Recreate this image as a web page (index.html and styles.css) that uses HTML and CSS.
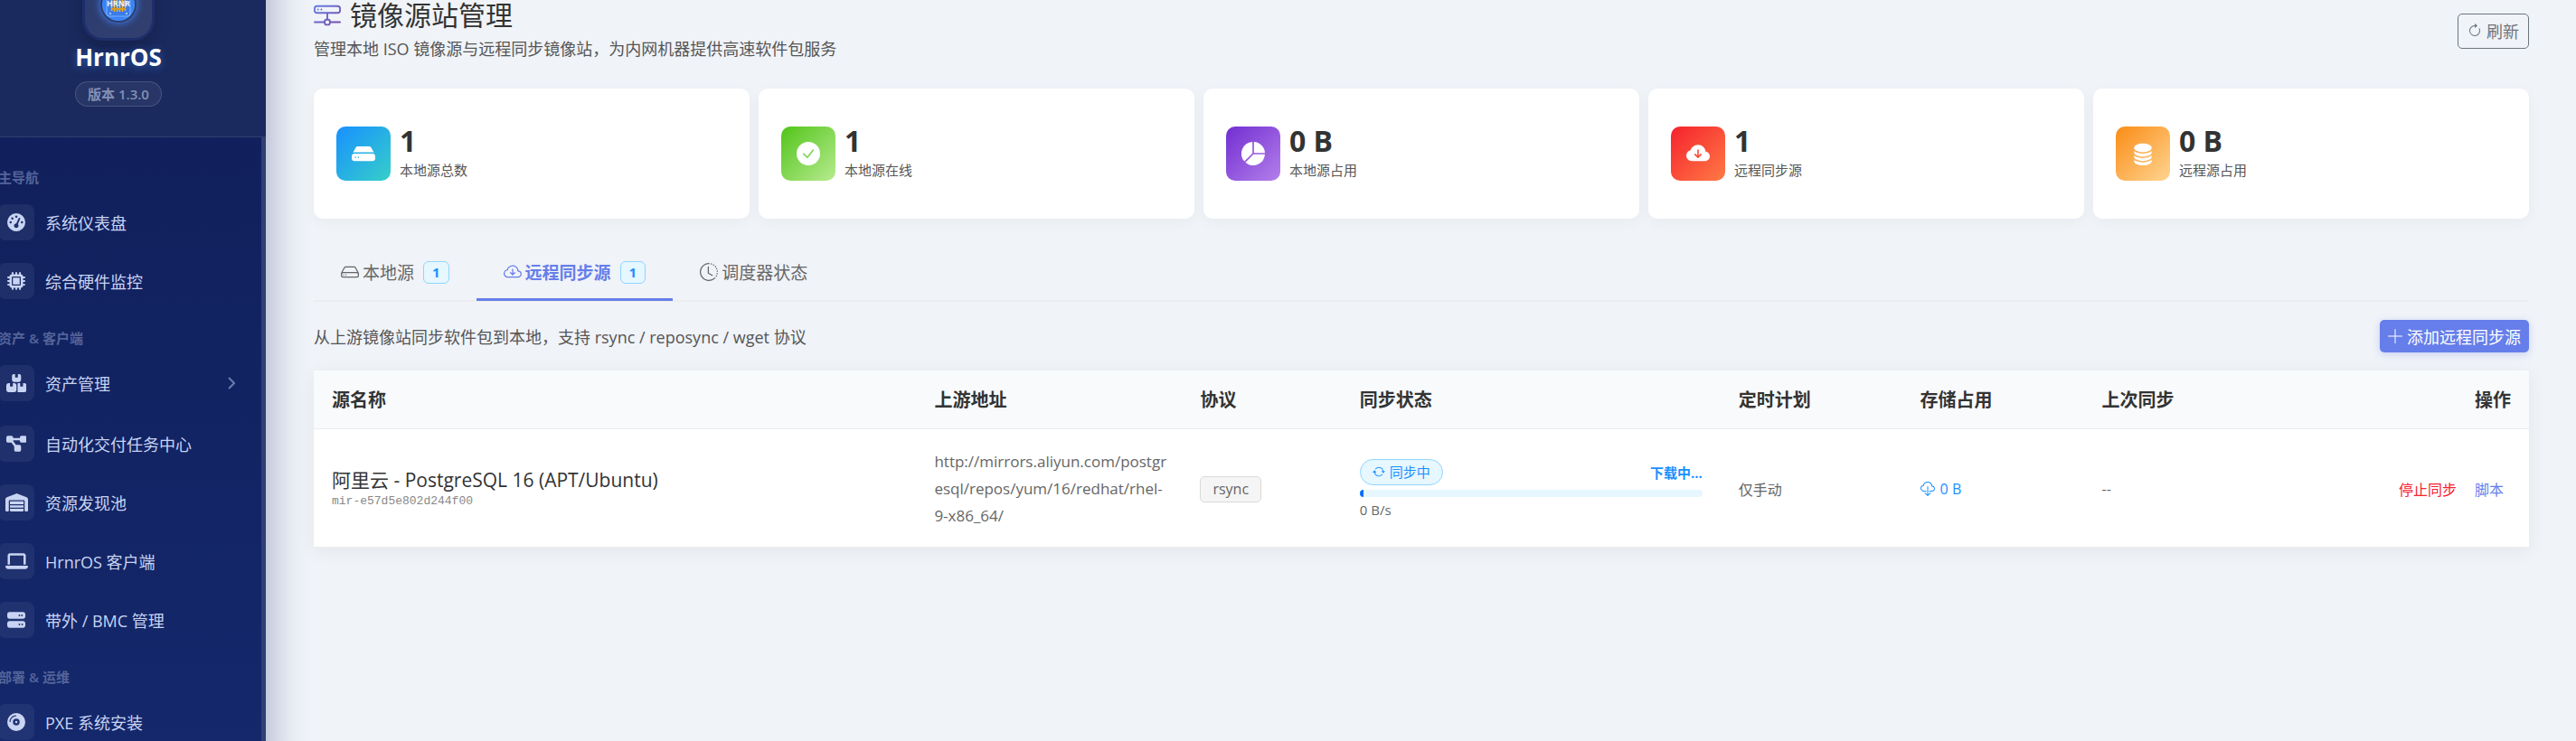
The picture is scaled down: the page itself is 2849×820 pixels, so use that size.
FILE: index.html
```html
<!DOCTYPE html>
<html lang="zh-CN">
<head>
    <meta charset="UTF-8">
    <meta name="viewport" content="width=device-width, initial-scale=1.0">
    <title>镜像源站管理 - HrnrOS</title>
    <link rel="stylesheet" href="styles.css">
</head>
<body>
    <div class="layout">
        <aside class="sidebar">
            <div class="sidebar-header">
                <div class="logo">
                    <svg viewBox="0 0 40 40" width="40" height="40">
                        <defs>
                            <radialGradient id="glow">
                                <stop offset="0.6" stop-color="#2f6fe0"/>
                                <stop offset="1" stop-color="#3f8cff"/>
                            </radialGradient>
                        </defs>
                        <circle cx="20" cy="20" r="18" fill="url(#glow)"/>
                        <rect x="7" y="8" width="26" height="25" rx="3" fill="#3b7bea" stroke="#7db8ff"/>
                        <path d="M12.500 12v15M15.500 12v16M18.500 12v16M21.500 12v16M24.500 12v16M27.500 12v15" stroke="#f0b429" stroke-width="1.500"/>
                        <path d="M12 25h16" stroke="#d99a20" stroke-width="2"/>
                        <circle cx="11" cy="30" r="1" fill="#bfe0ff"/>
                        <circle cx="29" cy="30" r="1" fill="#bfe0ff"/>
                        <text x="20" y="22" text-anchor="middle" class="logo-text">HRNR</text>
                    </svg>
                </div>
                <div class="brand">HrnrOS</div>
                <span class="version">版本 1.3.0</span>
            </div>
            <nav class="sidebar-nav">
                <div class="nav-label">主导航</div>
                <a class="nav-item" href="#">
                    <span class="nav-icon"><svg viewBox="0 0 512 512"><path d="M0 256a256 256 0 1 1 512 0A256 256 0 1 1 0 256zM288 96a32 32 0 1 0 -64 0 32 32 0 1 0 64 0zM256 416c35.3 0 64-28.7 64-64c0-17.4-6.9-33.1-18.1-44.6L366 161.7c5.3-12.1-.2-26.3-12.3-31.6s-26.3 .2-31.6 12.3L257.9 288c-.6 0-1.3 0-1.9 0c-35.3 0-64 28.7-64 64s28.7 64 64 64zM176 144a32 32 0 1 0 -64 0 32 32 0 1 0 64 0zM96 288a32 32 0 1 0 0-64 32 32 0 1 0 0 64zm352-32a32 32 0 1 0 -64 0 32 32 0 1 0 64 0z"/></svg></span>
                    <span>系统仪表盘</span>
                </a>
                <a class="nav-item" href="#">
                    <span class="nav-icon"><svg viewBox="0 0 512 512"><path d="M176 24c0-13.3-10.7-24-24-24s-24 10.7-24 24V64c-35.3 0-64 28.7-64 64H24c-13.3 0-24 10.7-24 24s10.7 24 24 24H64v56H24c-13.3 0-24 10.7-24 24s10.7 24 24 24H64v56H24c-13.3 0-24 10.7-24 24s10.7 24 24 24H64c0 35.3 28.7 64 64 64v40c0 13.3 10.7 24 24 24s24-10.7 24-24V448h56v40c0 13.3 10.7 24 24 24s24-10.7 24-24V448h56v40c0 13.3 10.7 24 24 24s24-10.7 24-24V448c35.3 0 64-28.7 64-64h40c13.3 0 24-10.7 24-24s-10.7-24-24-24H448V280h40c13.3 0 24-10.7 24-24s-10.7-24-24-24H448V176h40c13.3 0 24-10.7 24-24s-10.7-24-24-24H448c0-35.3-28.7-64-64-64V24c0-13.3-10.7-24-24-24s-24 10.7-24 24V64H280V24c0-13.3-10.7-24-24-24s-24 10.7-24 24V64H176V24zM160 128H352c17.7 0 32 14.3 32 32V352c0 17.7-14.3 32-32 32H160c-17.7 0-32-14.3-32-32V160c0-17.7 14.3-32 32-32zm192 32H160V352H352V160z" fill-rule="evenodd"/></svg></span>
                    <span>综合硬件监控</span>
                </a>
                <div class="nav-label">资产 &amp; 客户端</div>
                <a class="nav-item has-sub" href="#">
                    <span class="nav-icon"><svg viewBox="0 0 576 512"><path d="M248 0H208c-26.5 0-48 21.5-48 48V160c0 35.3 28.7 64 64 64H352c35.3 0 64-28.7 64-64V48c0-26.5-21.5-48-48-48H328V80c0 8.8-7.2 16-16 16H264c-8.8 0-16-7.2-16-16V0zM64 256c-35.3 0-64 28.7-64 64V448c0 35.3 28.7 64 64 64H224c35.3 0 64-28.7 64-64V320c0-35.3-28.7-64-64-64H184v80c0 8.8-7.2 16-16 16H120c-8.8 0-16-7.2-16-16V256H64zM352 512H512c35.3 0 64-28.7 64-64V320c0-35.3-28.7-64-64-64H472v80c0 8.8-7.2 16-16 16H408c-8.8 0-16-7.2-16-16V256H352c-15 0-28.8 5.1-39.7 13.8c4.9 10.4 7.7 22 7.7 34.2V464c0 12.2-2.8 23.8-7.7 34.2C323.2 506.9 337 512 352 512z"/></svg></span>
                    <span>资产管理</span>
                    <svg class="chevron" viewBox="0 0 8 14"><path d="M1 1l6 6-6 6"/></svg>
                </a>
                <a class="nav-item" href="#">
                    <span class="nav-icon"><svg viewBox="0 0 576 512"><path d="M0 80C0 53.5 21.5 32 48 32h96c26.5 0 48 21.5 48 48V96H384V80c0-26.5 21.5-48 48-48h96c26.5 0 48 21.5 48 48v96c0 26.5-21.5 48-48 48H432c-26.5 0-48-21.5-48-48V160H192v16c0 1.7-.1 3.4-.3 5L272 288h96c26.5 0 48 21.5 48 48v96c0 26.5-21.5 48-48 48H272c-26.5 0-48-21.5-48-48V336c0-1.7 .1-3.4 .3-5L144 224H48c-26.5 0-48-21.5-48-48V80z"/></svg></span>
                    <span>自动化交付任务中心</span>
                </a>
                <a class="nav-item" href="#">
                    <span class="nav-icon"><svg viewBox="0 0 640 512"><path d="M0 488V171.3c0-26.2 15.9-49.7 40.2-59.4L308.1 4.8c7.6-3.1 16.1-3.1 23.8 0L599.8 111.9c24.3 9.7 40.2 33.3 40.2 59.4V488c0 13.3-10.7 24-24 24H568c-13.3 0-24-10.7-24-24V224c0-17.7-14.3-32-32-32H128c-17.7 0-32 14.3-32 32V488c0 13.3-10.7 24-24 24H24c-13.3 0-24-10.7-24-24zm488 24l-336 0c-13.3 0-24-10.7-24-24V432H512l0 56c0 13.3-10.7 24-24 24zM128 400V336H512v64H128zm0-96V224H512l0 80H128z"/></svg></span>
                    <span>资源发现池</span>
                </a>
                <a class="nav-item" href="#">
                    <span class="nav-icon"><svg viewBox="0 0 640 512"><path d="M128 32C92.7 32 64 60.7 64 96V352h64V96H512V352h64V96c0-35.3-28.7-64-64-64H128zM19.2 384C8.6 384 0 392.6 0 403.2C0 445.6 34.4 480 76.8 480H563.2c42.4 0 76.8-34.4 76.8-76.8c0-10.6-8.6-19.2-19.2-19.2H19.2z"/></svg></span>
                    <span>HrnrOS 客户端</span>
                </a>
                <a class="nav-item" href="#">
                    <span class="nav-icon"><svg viewBox="0 0 512 512"><path d="M64 32C28.7 32 0 60.7 0 96v64c0 35.3 28.7 64 64 64H448c35.3 0 64-28.7 64-64V96c0-35.3-28.7-64-64-64H64zm280 72a24 24 0 1 1 0 48 24 24 0 1 1 0-48zm48 24a24 24 0 1 1 48 0 24 24 0 1 1 -48 0zM64 288c-35.3 0-64 28.7-64 64v64c0 35.3 28.7 64 64 64H448c35.3 0 64-28.7 64-64V352c0-35.3-28.7-64-64-64H64zm280 72a24 24 0 1 1 0 48 24 24 0 1 1 0-48zm56 24a24 24 0 1 1 48 0 24 24 0 1 1 -48 0z" fill-rule="evenodd"/></svg></span>
                    <span>带外 / BMC 管理</span>
                </a>
                <div class="nav-label">部署 &amp; 运维</div>
                <a class="nav-item" href="#">
                    <span class="nav-icon"><svg viewBox="0 0 512 512"><path d="M0 256a256 256 0 1 1 512 0A256 256 0 1 1 0 256zm256 32a32 32 0 1 1 0-64 32 32 0 1 1 0 64zm-96-32a96 96 0 1 0 192 0 96 96 0 1 0 -192 0zM96 240c0-35 17.5-71.1 45.2-98.8S205 96 240 96c8.8 0 16-7.2 16-16s-7.2-16-16-16c-45.4 0-89.2 22.3-121.5 54.5S64 194.6 64 240c0 8.8 7.2 16 16 16s16-7.2 16-16z" fill-rule="evenodd"/></svg></span>
                    <span>PXE 系统安装</span>
                </a>
            </nav>
        </aside>

        <main class="content">
            <header class="page-header">
                <div>
                    <h1 class="page-title">
                        <svg class="icon-title" viewBox="0 0 16 16">
                            <defs>
                                <linearGradient id="title-color" x1="0" y1="0" x2="1" y2="1">
                                    <stop offset="0" stop-color="#667eea"/>
                                    <stop offset="1" stop-color="#764ba2"/>
                                </linearGradient>
                            </defs>
                            <g fill="url(#title-color)">
                                <path d="M4.5 5a.5.5 0 1 0 0-1 .5.5 0 0 0 0 1M3 4.5a.5.5 0 1 1-1 0 .5.5 0 0 1 1 0"/>
                                <path d="M0 4a2 2 0 0 1 2-2h12a2 2 0 0 1 2 2v1a2 2 0 0 1-2 2H8.500v3a1.500 1.500 0 0 1 1.500 1.500h5.500a.5.5 0 0 1 0 1H10A1.500 1.500 0 0 1 8.500 14h-1A1.500 1.500 0 0 1 6 12.500H.5a.5.5 0 0 1 0-1H6A1.500 1.500 0 0 1 7.500 10V7H2a2 2 0 0 1-2-2zm1 0v1a1 1 0 0 0 1 1h12a1 1 0 0 0 1-1V4a1 1 0 0 0-1-1H2a1 1 0 0 0-1 1m6 7.500v1a.5.5 0 0 0 .5.5h1a.5.5 0 0 0 .5-.5v-1a.5.5 0 0 0-.5-.5h-1a.5.5 0 0 0-.5.5" fill-rule="evenodd"/>
                            </g>
                        </svg>
                        镜像源站管理
                    </h1>
                    <p class="page-desc">管理本地 ISO 镜像源与远程同步镜像站，为内网机器提供高速软件包服务</p>
                </div>
                <button class="btn btn-outline" type="button">
                    <svg class="icon" viewBox="0 0 16 16"><path fill-rule="evenodd" d="M8 3a5 5 0 1 0 4.546 2.914.5.5 0 0 1 .908-.417A6 6 0 1 1 8 2z"/><path d="M8 4.466V.534a.25.25 0 0 1 .41-.192l2.36 1.966c.12.1.12.284 0 .384L8.410 4.658A.25.25 0 0 1 8 4.466"/></svg>
                    刷新
                </button>
            </header>

            <section class="stats">
                <div class="stat-card">
                    <div class="stat-icon blue"><svg viewBox="0 0 16 16"><path d="M0 10a2 2 0 0 1 2-2h12a2 2 0 0 1 2 2v1a2 2 0 0 1-2 2H2a2 2 0 0 1-2-2zm2.500 1a.5.5 0 1 0 0-1 .5.5 0 0 0 0 1m2 0a.5.5 0 1 0 0-1 .5.5 0 0 0 0 1M.91 7.204A3 3 0 0 1 2 7h12c.384 0 .752.072 1.090.204l-1.867-3.422A1.500 1.500 0 0 0 11.906 3H4.094a1.500 1.500 0 0 0-1.317.782z"/></svg></div>
                    <div>
                        <div class="stat-value">1</div>
                        <div class="stat-label">本地源总数</div>
                    </div>
                </div>
                <div class="stat-card">
                    <div class="stat-icon green"><svg viewBox="0 0 16 16"><circle cx="8" cy="8" r="8"/><path class="check" d="M4.800 8.200l2.500 2.400 4-5"/></svg></div>
                    <div>
                        <div class="stat-value">1</div>
                        <div class="stat-label">本地源在线</div>
                    </div>
                </div>
                <div class="stat-card">
                    <div class="stat-icon purple"><svg viewBox="0 0 16 16"><path d="M15.985 8.500H8.207l-5.500 5.500a8 8 0 0 0 13.277-5.500zM2 13.292A8 8 0 0 1 7.500.015v7.778zM8.500.015V7.500h7.485A8 8 0 0 0 8.500.015"/></svg></div>
                    <div>
                        <div class="stat-value">0 B</div>
                        <div class="stat-label">本地源占用</div>
                    </div>
                </div>
                <div class="stat-card">
                    <div class="stat-icon red"><svg viewBox="0 0 16 16"><path d="M8 2a5.530 5.530 0 0 0-3.594 1.342c-.766.66-1.321 1.520-1.464 2.383C1.266 6.095 0 7.555 0 9.318 0 11.366 1.708 13 3.781 13h8.906C14.502 13 16 11.570 16 9.773c0-1.636-1.242-2.969-2.834-3.194C12.923 3.999 10.690 2 8 2m2.354 6.854-2 2a.5.5 0 0 1-.708 0l-2-2a.5.5 0 1 1 .708-.708L7.500 9.293V5.500a.5.5 0 0 1 1 0v3.793l1.146-1.147a.5.5 0 0 1 .708.708"/></svg></div>
                    <div>
                        <div class="stat-value">1</div>
                        <div class="stat-label">远程同步源</div>
                    </div>
                </div>
                <div class="stat-card">
                    <div class="stat-icon orange"><svg viewBox="0 0 16 16"><path d="M3.904 1.777C4.978 1.289 6.427 1 8 1s3.022.289 4.096.777C13.125 2.245 14 2.993 14 4s-.875 1.755-1.904 2.223C11.022 6.711 9.573 7 8 7s-3.022-.289-4.096-.777C2.875 5.755 2 5.007 2 4s.875-1.755 1.904-2.223"/><path d="M2 6.161V7c0 1.007.875 1.755 1.904 2.223C4.978 9.710 6.427 10 8 10s3.022-.289 4.096-.777C13.125 8.755 14 8.007 14 7v-.839c-.457.432-1.004.751-1.490.972C11.278 7.693 9.682 8 8 8s-3.278-.307-4.510-.867c-.486-.22-1.033-.54-1.490-.972"/><path d="M2 9.161V10c0 1.007.875 1.755 1.904 2.223C4.978 12.711 6.427 13 8 13s3.022-.289 4.096-.777C13.125 11.755 14 11.007 14 10v-.839c-.457.432-1.004.751-1.490.972-1.232.56-2.828.867-4.510.867s-3.278-.307-4.510-.867c-.486-.22-1.033-.54-1.490-.972"/><path d="M2 12.161V13c0 1.007.875 1.755 1.904 2.223C4.978 15.711 6.427 16 8 16s3.022-.289 4.096-.777C13.125 14.755 14 14.007 14 13v-.839c-.457.432-1.004.751-1.490.972-1.232.56-2.828.867-4.510.867s-3.278-.307-4.510-.867c-.486-.22-1.033-.54-1.490-.972"/></svg></div>
                    <div>
                        <div class="stat-value">0 B</div>
                        <div class="stat-label">远程源占用</div>
                    </div>
                </div>
            </section>

            <div class="tabs" role="tablist">
                <button class="tab" type="button" role="tab">
                    <svg class="icon-tab" viewBox="0 0 16 16"><path d="M4.500 11a.5.5 0 1 0 0-1 .5.5 0 0 0 0 1M3 10.500a.5.5 0 1 1-1 0 .5.5 0 0 1 1 0"/><path d="M16 11a2 2 0 0 1-2 2H2a2 2 0 0 1-2-2V9.510c0-.418.105-.83.305-1.197l2.472-4.531A1.500 1.500 0 0 1 4.094 3h7.812a1.500 1.500 0 0 1 1.317.782l2.472 4.530c.2.368.305.78.305 1.198zM3.655 4.260 1.592 8.043Q1.790 8 2 8h12q.21 0 .408.042L12.345 4.260a.5.5 0 0 0-.439-.26H4.094a.5.5 0 0 0-.44.26zM1 10v1a1 1 0 0 0 1 1h12a1 1 0 0 0 1-1v-1a1 1 0 0 0-1-1H2a1 1 0 0 0-1 1"/></svg>
                    本地源
                    <span class="count">1</span>
                </button>
                <button class="tab active" type="button" role="tab" aria-selected="true">
                    <svg class="icon-tab" viewBox="0 0 16 16"><path d="M7.646 10.854a.5.5 0 0 0 .708 0l2-2a.5.5 0 0 0-.708-.708L8.500 9.293V5.500a.5.5 0 0 0-1 0v3.793L6.354 8.146a.5.5 0 1 0-.708.708z"/><path d="M4.406 3.342A5.530 5.530 0 0 1 8 2c2.690 0 4.923 2 5.166 4.579C14.758 6.804 16 8.137 16 9.773 16 11.569 14.502 13 12.687 13H3.781C1.708 13 0 11.366 0 9.318c0-1.763 1.266-3.223 2.942-3.593.143-.863.698-1.723 1.464-2.383m.653.757c-.757.653-1.153 1.440-1.153 2.056v.448l-.445.049C2.064 6.805 1 7.952 1 9.318 1 10.785 2.230 12 3.781 12h8.906C13.980 12 15 10.988 15 9.773c0-1.216-1.020-2.228-2.313-2.228h-.5v-.5C12.188 4.825 10.328 3 8 3a4.530 4.530 0 0 0-2.941 1.100z"/></svg>
                    远程同步源
                    <span class="count">1</span>
                </button>
                <button class="tab" type="button" role="tab">
                    <svg class="icon-tab" viewBox="0 0 16 16"><path d="M8.515 1.019A7 7 0 0 0 8 1V0a8 8 0 0 1 .589.022zm2.004.45a7 7 0 0 0-.985-.299l.219-.976q.576.129 1.126.342zm1.370.71a7 7 0 0 0-.439-.27l.493-.87a8 8 0 0 1 .979.654l-.615.789a7 7 0 0 0-.418-.302zm1.834 1.790a7 7 0 0 0-.653-.796l.724-.69q.406.429.747.91zm.744 1.352a7 7 0 0 0-.214-.468l.893-.45a8 8 0 0 1 .45 1.088l-.95.313a7 7 0 0 0-.179-.483m.53 2.507a7 7 0 0 0-.1-1.025l.985-.17q.1.58.116 1.170zm-.131 1.538q.05-.254.081-.51l.993.123a8 8 0 0 1-.23 1.155l-.964-.267q.069-.247.12-.501m-.952 2.379q.276-.436.486-.908l.914.405q-.24.54-.555 1.038zm-.964 1.205q.183-.183.35-.378l.758.653a8 8 0 0 1-.401.432z"/><path d="M8 1a7 7 0 1 0 4.950 11.950l.707.707A8.001 8.001 0 1 1 8 0z"/><path d="M7.500 3a.5.5 0 0 1 .5.5v5.210l3.248 1.856a.5.5 0 0 1-.496.868l-3.500-2A.5.5 0 0 1 7 9V3.500a.5.5 0 0 1 .5-.5"/></svg>
                    调度器状态
                </button>
            </div>

            <div class="toolbar">
                <span>从上游镜像站同步软件包到本地，支持 rsync / reposync / wget 协议</span>
                <button class="btn btn-primary" type="button">
                    <svg class="icon" viewBox="0 0 16 16"><path d="M8 0a.5.5 0 0 1 .5.5v7h7a.5.5 0 0 1 0 1h-7v7a.5.5 0 0 1-1 0v-7h-7a.5.5 0 0 1 0-1h7v-7A.5.5 0 0 1 8 0"/></svg>
                    添加远程同步源
                </button>
            </div>

            <table class="mirror-table">
                <thead>
                    <tr>
                        <th class="col-name">源名称</th>
                        <th class="col-url">上游地址</th>
                        <th class="col-proto">协议</th>
                        <th class="col-status">同步状态</th>
                        <th class="col-plan">定时计划</th>
                        <th class="col-size">存储占用</th>
                        <th>上次同步</th>
                        <th class="ops">操作</th>
                    </tr>
                </thead>
                <tbody>
                    <tr>
                        <td>
                            <div class="mirror-name">阿里云 - PostgreSQL 16 (APT/Ubuntu)</div>
                            <div class="mirror-id">mir-e57d5e802d244f00</div>
                        </td>
                        <td class="url">http://mirrors.aliyun.com/postgresql/repos/yum/16/redhat/rhel-9-x86_64/</td>
                        <td><span class="tag">rsync</span></td>
                        <td>
                            <div class="sync-head">
                                <span class="pill">
                                    <svg viewBox="0 0 16 16"><path d="M11.534 7h3.932a.25.25 0 0 1 .192.41l-1.966 2.360a.25.25 0 0 1-.384 0l-1.966-2.360a.25.25 0 0 1 .192-.41m-11 2h3.932a.25.25 0 0 0 .192-.41L2.692 6.230a.25.25 0 0 0-.384 0L.342 8.590A.25.25 0 0 0 .534 9"/><path d="M8 3c-1.552 0-2.940.707-3.857 1.818a.5.5 0 1 1-.771-.636A6.002 6.002 0 0 1 13.917 7H12.900A5 5 0 0 0 8 3M3.100 9a5.002 5.002 0 0 0 8.757 2.182.5.5 0 1 1 .771.636A6.002 6.002 0 0 1 2.083 9z"/></svg>
                                    同步中
                                </span>
                                <strong class="sync-text">下载中...</strong>
                            </div>
                            <div class="progress"><div class="progress-bar" style="width: 1%"></div></div>
                            <div class="speed">0 B/s</div>
                        </td>
                        <td>仅手动</td>
                        <td>
                            <span class="size">
                                <svg class="icon-size" viewBox="0 0 16 16"><path d="M4.406 1.342A5.530 5.530 0 0 1 8 0c2.690 0 4.923 2 5.166 4.579C14.758 4.804 16 6.137 16 7.773 16 9.569 14.502 11 12.687 11H10a.5.5 0 0 1 0-1h2.688C13.979 10 15 8.988 15 7.773c0-1.216-1.020-2.228-2.313-2.228h-.5v-.5C12.188 2.825 10.328 1 8 1a4.530 4.530 0 0 0-2.941 1.100c-.757.652-1.153 1.438-1.153 2.055v.448l-.445.049C2.064 4.805 1 5.952 1 7.318 1 8.785 2.230 10 3.781 10H6a.5.5 0 0 1 0 1H3.781C1.708 11 0 9.366 0 7.318c0-1.763 1.266-3.223 2.942-3.593.143-.863.698-1.723 1.464-2.383"/><path d="M7.646 15.854a.5.5 0 0 0 .708 0l3-3a.5.5 0 0 0-.708-.708L8.500 14.293V5.500a.5.5 0 0 0-1 0v8.793l-2.146-2.147a.5.5 0 0 0-.708.708z"/></svg>
                                0 B
                            </span>
                        </td>
                        <td>--</td>
                        <td class="ops">
                            <div class="actions">
                                <button class="link danger" type="button">停止同步</button>
                                <button class="link" type="button">脚本</button>
                            </div>
                        </td>
                    </tr>
                </tbody>
            </table>
        </main>
    </div>
</body>
</html>
```
FILE: styles.css
```css
*{
    margin: 0;
    padding: 0;
    box-sizing: border-box;
}
body{
    font-family: "Open Sans", "Noto Sans CJK SC", sans-serif;
    font-size: 18px;
    color: #333;
    background: #f0f3f8;
}
button{
    font-family: inherit;
    cursor: pointer;
}
svg{
    fill: currentColor;
    flex-shrink: 0;
}
.layout{
    display: flex;
    height: 100vh;
    overflow: hidden;
}

/* sidebar */
.sidebar{
    display: flex;
    flex-direction: column;
    flex: 0 0 326px;
    margin: -52px 0 -40px -32px;
    background: linear-gradient(180deg, #101e58, #14286c);
    box-shadow: 8px 0 36px rgba(26, 42, 108, 0.3);
}
.sidebar-header{
    display: flex;
    flex-direction: column;
    align-items: center;
    padding: 20px 20px 33px;
    background: #1a2a5e;
    border-bottom: 1px solid rgba(255, 255, 255, 0.1);
}
.logo{
    display: flex;
    align-items: center;
    justify-content: center;
    width: 74px;
    height: 74px;
    border-radius: 20px;
    background: linear-gradient(135deg, #2b3b6f, #323f70);
    box-shadow: 0 0 0 3px #1c2f6b, 0 8px 20px rgba(0, 0, 0, 0.25);
}
.logo svg{
    border-radius: 50%;
    box-shadow: 0 0 8px #3f8cff;
}
.logo-text{
    font: bold 9px "Open Sans", sans-serif;
    fill: #e8f1ff;
}
.brand{
    margin-top: 5px;
    font-size: 26px;
    font-weight: 700;
    line-height: 32px;
    color: #fff;
    text-shadow: 0 2px 10px rgba(64, 140, 255, 0.5);
}
.version{
    margin-top: 11px;
    padding: 0 13px;
    border: 1px solid rgba(255, 255, 255, 0.15);
    border-radius: 14px;
    background: rgba(255, 255, 255, 0.06);
    font-size: 15px;
    font-weight: 600;
    line-height: 26px;
    color: #8390b5;
}
.sidebar-nav{
    flex: 1;
    min-height: 0;
    padding: 16px 24px 0 30px;
    border-right: 5px solid #2f3f75;
    overflow: hidden;
}
.nav-label{
    padding: 18px 0 10px;
    font-size: 15px;
    font-weight: 600;
    line-height: 20px;
    color: #54649a;
}
.nav-item{
    display: flex;
    align-items: center;
    gap: 12px;
    height: 60px;
    margin-bottom: 5px;
    color: #c8d4f2;
    text-decoration: none;
}
.nav-item.has-sub{
    margin-bottom: 7px;
}
.nav-icon{
    display: flex;
    align-items: center;
    justify-content: center;
    width: 40px;
    height: 40px;
    border-radius: 8px;
    background: rgba(255, 255, 255, 0.06);
}
.nav-icon svg{
    height: 20px;
}
.chevron{
    width: 8px;
    height: 14px;
    margin: 0 5px 0 auto;
    fill: none;
    stroke: #6b7aac;
    stroke-width: 2;
}

/* page header */
.content{
    flex: 1;
    min-width: 0;
    padding: 0 52px 0 53px;
}
.page-header{
    display: flex;
    align-items: center;
    justify-content: space-between;
    margin-bottom: 30px;
}
.page-title{
    display: flex;
    align-items: center;
    gap: 10px;
    font-size: 30px;
    font-weight: 400;
    line-height: 34px;
}
.icon-title{
    width: 30px;
    height: 30px;
}
.page-desc{
    margin-top: 6px;
    line-height: 28px;
    color: #555;
}
.btn{
    display: flex;
    align-items: center;
    gap: 5px;
    border-radius: 5px;
    font-size: 18px;
}
.btn-outline{
    height: 39px;
    padding: 0 10px;
    border: 1px solid #6c757d;
    background: none;
    color: #6c757d;
}
.btn-primary{
    height: 36px;
    padding: 0 9px;
    border: none;
    background: #667eea;
    color: #fff;
    box-shadow: 0 2px 8px rgba(102, 126, 234, 0.3);
}
.icon{
    width: 16px;
    height: 16px;
}

/* stat cards */
.stats{
    display: grid;
    grid-template-columns: repeat(5, 1fr);
    gap: 10px;
}
.stat-card{
    display: flex;
    align-items: center;
    gap: 10px;
    padding: 42px 25px;
    border-radius: 10px;
    background: #fff;
    box-shadow: 0 4px 16px rgba(0, 0, 0, 0.04);
}
.stat-icon{
    display: flex;
    align-items: center;
    justify-content: center;
    width: 60px;
    height: 60px;
    border-radius: 10px;
    color: #fff;
}
.stat-icon svg{
    width: 26px;
    height: 26px;
}
.blue{ background: linear-gradient(135deg, #1890ff, #36cfc9); }
.green{ background: linear-gradient(135deg, #52c41a, #b7eb8f); }
.purple{ background: linear-gradient(135deg, #722ed1, #b37feb); }
.red{ background: linear-gradient(135deg, #f5222d, #ff7a45); }
.orange{ background: linear-gradient(135deg, #fa8c16, #ffd591); }
.check{
    fill: none;
    stroke: #7ad451;
    stroke-width: 1;
    stroke-linecap: round;
    stroke-linejoin: round;
}
.stat-value{
    font-size: 32px;
    font-weight: 700;
    line-height: 32px;
}
.stat-label{
    margin-top: 4px;
    font-size: 15px;
    line-height: 24px;
    color: #555;
}

/* tabs */
.tabs{
    display: flex;
    margin-top: 30px;
    border-bottom: 2px solid #ededf0;
}
.tab{
    display: flex;
    align-items: center;
    gap: 4px;
    height: 61px;
    margin-bottom: -1px;
    padding: 0 30px;
    border: none;
    border-bottom: 3px solid transparent;
    background: none;
    font-size: 19px;
    color: #666;
}
.tab.active{
    border-color: #667eea;
    font-weight: 700;
    color: #667eea;
}
.icon-tab{
    width: 20px;
    height: 20px;
}
.count{
    margin-left: 6px;
    padding: 0 9px;
    border: 1px solid #91d5ff;
    border-radius: 6px;
    background: #e6f7ff;
    font-size: 15px;
    font-weight: 700;
    line-height: 23px;
    color: #1890ff;
}

.toolbar{
    display: flex;
    align-items: center;
    justify-content: space-between;
    margin: 20px 0;
    color: #555;
}

/* mirror table */
.mirror-table{
    width: 100%;
    table-layout: fixed;
    border-spacing: 0;
    background: #fff;
    box-shadow: 0 4px 20px rgba(0, 0, 0, 0.06);
    font-size: 16px;
}
.mirror-table th{
    padding: 21px 20px 19px;
    border-bottom: 1px solid #e9ecef;
    background: #f8fafc;
    font-size: 20px;
    line-height: 24px;
    text-align: left;
}
.mirror-table td{
    padding: 21px 20px 19px;
    border-bottom: 1px solid #eee;
    color: #666;
    vertical-align: middle;
}
.col-name{ width: 27.2%; }
.col-url{ width: 12%; }
.col-proto{ width: 7.2%; }
.col-status{ width: 17.1%; }
.col-plan, .col-size{ width: 8.2%; }
.mirror-table .ops{
    text-align: right;
}
.mirror-name{
    font-size: 21px;
    line-height: 28px;
    color: #333;
}
.mirror-id{
    font-family: "Liberation Mono", monospace;
    font-size: 13px;
    line-height: 20px;
    color: #888;
}
.mirror-table .url{
    padding-right: 15px;
    font-size: 17px;
    line-height: 30px;
    word-break: break-all;
}
.tag{
    display: inline-block;
    padding: 0 13px;
    border: 1px solid #d9d9d9;
    border-radius: 5px;
    background: #f5f5f5;
    line-height: 27px;
}
.sync-head{
    display: flex;
    align-items: center;
    justify-content: space-between;
    margin-bottom: 5px;
    font-size: 15px;
    color: #1890ff;
}
.pill{
    display: flex;
    align-items: center;
    gap: 5px;
    padding: 0 13px;
    border: 1px solid #91d5ff;
    border-radius: 15px;
    background: #e6f7ff;
    line-height: 27px;
}
.pill svg{
    width: 14px;
    height: 14px;
}
.progress{
    height: 8px;
    border-radius: 4px;
    background: #e6f7ff;
    overflow: hidden;
}
.progress-bar{
    height: 100%;
    background: #0d6efd;
}
.speed{
    margin-top: 3px;
    font-size: 15px;
    line-height: 22px;
}
.size{
    display: flex;
    align-items: center;
    gap: 6px;
    color: #1890ff;
}
.icon-size{
    width: 16px;
    height: 16px;
}
.actions{
    display: flex;
    justify-content: flex-end;
    gap: 4px;
}
.link{
    padding: 2px 8px;
    border: none;
    background: none;
    font-size: 16px;
    color: #667eea;
}
.link.danger{
    color: #f5222d;
}
```
